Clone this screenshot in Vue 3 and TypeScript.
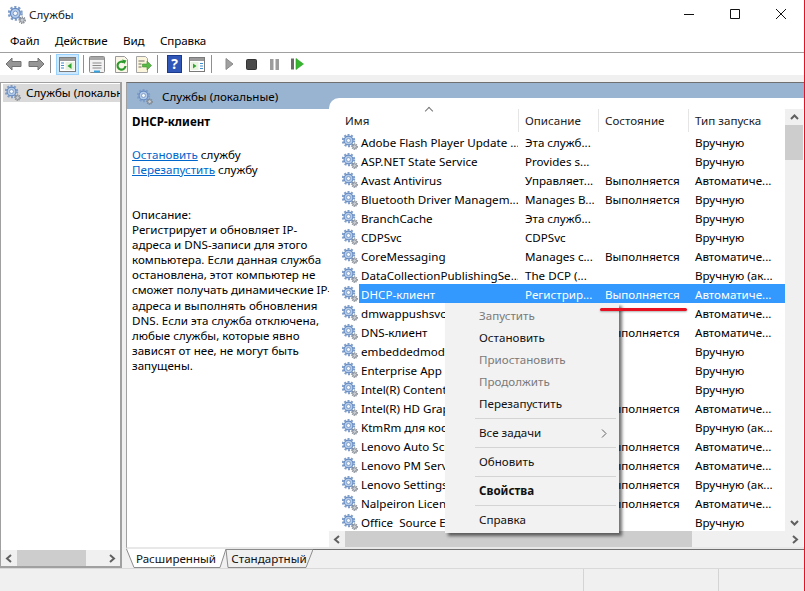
<script setup lang="ts">
interface Service {
  name: string
  desc: string
  state: string
  start: string
  selected?: boolean
}

const RUN = 'Выполняется'
const AUTO = 'Автоматиче...'
const MAN = 'Вручную'
const TRIG = 'Вручную (ак...'

const services: Service[] = [
  { name: 'Adobe Flash Player Update ...', desc: 'Эта служб...', state: '', start: MAN },
  { name: 'ASP.NET State Service', desc: 'Provides s...', state: '', start: MAN },
  { name: 'Avast Antivirus', desc: 'Управляет...', state: RUN, start: AUTO },
  { name: 'Bluetooth Driver Managem...', desc: 'Manages B...', state: RUN, start: MAN },
  { name: 'BranchCache', desc: 'Эта служб...', state: '', start: MAN },
  { name: 'CDPSvc', desc: 'CDPSvc', state: '', start: MAN },
  { name: 'CoreMessaging', desc: 'Manages c...', state: RUN, start: AUTO },
  { name: 'DataCollectionPublishingSe...', desc: 'The DCP (...', state: '', start: TRIG },
  { name: 'DHCP-клиент', desc: 'Регистрир...', state: RUN, start: AUTO, selected: true },
  { name: 'dmwappushsvc', desc: '', state: '', start: AUTO },
  { name: 'DNS-клиент', desc: '', state: RUN, start: AUTO },
  { name: 'embeddedmode', desc: '', state: '', start: MAN },
  { name: 'Enterprise App Management', desc: '', state: '', start: MAN },
  { name: 'Intel(R) Content Protection', desc: '', state: '', start: MAN },
  { name: 'Intel(R) HD Graphics', desc: '', state: RUN, start: AUTO },
  { name: 'KtmRm для координатора', desc: '', state: '', start: TRIG },
  { name: 'Lenovo Auto Scroll', desc: '', state: RUN, start: AUTO },
  { name: 'Lenovo PM Service', desc: '', state: RUN, start: AUTO },
  { name: 'Lenovo Settings', desc: '', state: RUN, start: TRIG },
  { name: 'Nalpeiron Licensing', desc: '', state: RUN, start: AUTO },
  { name: 'Office  Source Engine', desc: '', state: '', start: MAN },
]

const descLines = [
  'Описание:',
  'Регистрирует и обновляет IP-',
  'адреса и DNS-записи для этого',
  'компьютера. Если данная служба',
  'остановлена, этот компьютер не',
  'сможет получать динамические IP-',
  'адреса и выполнять обновления',
  'DNS. Если эта служба отключена,',
  'любые службы, которые явно',
  'зависят от нее, не могут быть',
  'запущены.',
]

const menuItems = [
  { label: 'Запустить', off: true },
  { label: 'Остановить' },
  { label: 'Приостановить', off: true },
  { label: 'Продолжить', off: true },
  { label: 'Перезапустить' },
  { sep: true },
  { label: 'Все задачи', arrow: true },
  { sep: true },
  { label: 'Обновить' },
  { sep: true },
  { label: 'Свойства', bold: true },
  { sep: true },
  { label: 'Справка' },
]
</script>

<template>
  <div class="win">
    <svg width="0" height="0" class="defs">
      <symbol id="gear" viewBox="0 0 16 16">
        <circle cx="6.5" cy="6.5" r="5.7" fill="none" stroke="#7f9dc9" stroke-width="2" stroke-dasharray="2 1.6" />
        <circle cx="6.5" cy="6.5" r="4.4" fill="#b4cbea" stroke="#648ac0" stroke-width="1.1" />
        <circle cx="6.5" cy="6.5" r="2" fill="#f4f8fd" stroke="#6f90bf" stroke-width=".8" />
        <circle cx="12.6" cy="12.6" r="2.7" fill="none" stroke="#7f868e" stroke-width="1.2" stroke-dasharray="1.1 .9" />
        <circle cx="12.6" cy="12.6" r="1.9" fill="#c8cdd3" stroke="#6f767e" stroke-width=".7" />
      </symbol>
    </svg>

    <header class="titlebar">
      <svg class="gear title-gear"><use href="#gear" /></svg>
      <span class="title">Службы</span>
      <div class="winbtns">
        <svg width="46" height="30" viewBox="0 0 46 30"><path d="M18 14.500h10" stroke="#111" fill="none" /></svg>
        <svg width="46" height="30" viewBox="0 0 46 30"><path d="M18.500 9.500h9v9h-9z" stroke="#111" fill="none" /></svg>
        <svg width="46" height="30" viewBox="0 0 46 30"><path d="M18 9l10 10M28 9l-10 10" stroke="#111" fill="none" /></svg>
      </div>
    </header>

    <nav class="menubar">
      <span>Файл</span><span>Действие</span><span>Вид</span><span>Справка</span>
    </nav>

    <div class="toolbar">
      <svg width="17" height="14" viewBox="0 0 17 14"><path d="M1 7l6-6v3.500h9v5H7V13z" fill="#969696" stroke="#737373" /></svg>
      <svg class="t-next" width="17" height="14" viewBox="0 0 17 14"><path d="M16 7l-6-6v3.500H1v5h9V13z" fill="#969696" stroke="#737373" /></svg>
      <i class="tsep s1"></i>
      <div class="tbtn">
        <svg width="17" height="15" viewBox="0 0 17 15"><rect x=".5" y=".5" width="16" height="14" fill="#fff" stroke="#7a7a7a" /><rect x="1" y="1" width="15" height="3" fill="#9a9a9a" /><path d="M2 6h3M2 8.500h3M2 11h3" stroke="#3f8fd0" stroke-width="1.200" /><rect x="6.500" y="5" width="9" height="8" fill="#e8f3e0" /><path d="M12.500 6v6l-4-3z" fill="#2fa52f" /></svg>
      </div>
      <i class="tsep s2"></i>
      <svg class="t-a" width="16" height="17" viewBox="0 0 16 17"><rect x=".5" y=".5" width="15" height="16" rx="1" fill="#f2f2f2" stroke="#8a8a8a" /><rect x="1" y="1" width="14" height="3" fill="#a8a8a8" /><path d="M3.500 7h9M3.500 9.500h9M3.500 12h9" stroke="#8a8a8a" /><path d="M5 15.500h6" stroke="#36a2e0" stroke-width="2" /></svg>
      <svg class="t-b" width="15" height="17" viewBox="0 0 15 17"><path d="M1.500.5h9l3 3v13h-12z" fill="#fbf7e8" stroke="#9a9a9a" /><path d="M11.500 10a4 4 0 1 1-1.500-3.500" fill="none" stroke="#2d9a2d" stroke-width="2.200" /><path d="M8 3.500l4.500 1-2 3.500z" fill="#2d9a2d" /></svg>
      <svg class="t-c" width="17" height="17" viewBox="0 0 17 17"><path d="M1.500.5h9l2 2v14h-11z" fill="#fbf5dc" stroke="#a5a5a5" /><path d="M3.500 5h6M3.500 8h3M3.500 11h3" stroke="#6e6e6e" /><path d="M7.500 8h4.500V5l4.500 4.500L12 14v-3H7.500z" fill="#58b947" stroke="#3c8f31" stroke-width=".6" /></svg>
      <i class="tsep s1"></i>
      <div class="help">?</div>
      <svg class="t-d" width="16" height="15" viewBox="0 0 16 15"><rect x=".5" y=".5" width="15" height="14" fill="#fff" stroke="#7a7a7a" /><rect x="1" y="1" width="14" height="3" fill="#9a9a9a" /><rect x="1.500" y="5" width="8" height="8" fill="#e8f3e0" /><path d="M4 6.500v5l3.500-2.500z" fill="#2fa52f" /><path d="M11 6.500h3M11 9h3M11 11.500h3" stroke="#3f8fd0" stroke-width="1.200" /></svg>
      <i class="tsep s3"></i>
      <svg class="t-play" width="9" height="12" viewBox="0 0 9 12"><path d="M1 .5v11l7-5.500z" fill="#a0a0a0" stroke="#8b8b8b" /></svg>
      <svg class="t-stop" width="11" height="11" viewBox="0 0 11 11"><rect x=".5" y=".5" width="10" height="10" rx="1" fill="#4a4a4a" stroke="#333" /></svg>
      <svg class="t-pause" width="9" height="11" viewBox="0 0 9 11"><path d="M0 0h3.500v11H0zM5.500 0H9v11H5.500z" fill="#9c9c9c" /></svg>
      <svg class="t-resume" width="13" height="12" viewBox="0 0 13 12"><path d="M0 .5h3v11H0z" fill="#6a6a6a" /><path d="M5 .5v11l7.500-5.500z" fill="#36b62e" stroke="#2a9a24" stroke-width=".6" /></svg>
    </div>

    <main class="main">
      <aside class="tree">
        <div class="tree-body">
          <div class="tree-item">
            <svg class="gear"><use href="#gear" /></svg>
            <span>Службы (локальные)</span>
          </div>
        </div>
        <div class="hbar tree-bar">
          <svg class="arr" width="16" height="9" viewBox="0 0 16 9"><path d="M10 1L6 4.500 10 8" fill="none" stroke="#606060" stroke-width="2" /></svg>
          <div class="track"><i class="thumb"></i></div>
          <svg class="arr" width="16" height="9" viewBox="0 0 16 9"><path d="M6 1l4 3.500L6 8" fill="none" stroke="#606060" stroke-width="2" /></svg>
        </div>
      </aside>

      <section class="content">
        <div class="pane">
          <div class="info">
            <div class="info-head">
              <svg class="gear"><use href="#gear" /></svg>
              <span>Службы (локальные)</span>
            </div>
            <div class="info-body">
              <h1>DHCP-клиент</h1>
              <p class="links"><a>Остановить</a> службу<br /><a>Перезапустить</a> службу</p>
              <p v-for="(l, i) in descLines" :key="i" class="dl">{{ l }}</p>
            </div>
          </div>

          <div class="list">
            <div class="list-main">
              <div class="rows">
                <div class="thead">
                  <span class="sort"></span>
                  <div class="c1">Имя</div>
                  <div class="c2">Описание</div>
                  <div class="c3">Состояние</div>
                  <div class="c4">Тип запуска</div>
                </div>
                <div v-for="s in services" :key="s.name" class="row" :class="{ sel: s.selected }">
                  <div class="c1">
                    <svg class="gear"><use href="#gear" /></svg>
                    <span class="nm">{{ s.name }}</span>
                  </div>
                  <div class="c2">{{ s.desc }}</div>
                  <div class="c3">{{ s.state }}</div>
                  <div class="c4">{{ s.start }}</div>
                </div>
              </div>
              <div class="vbar">
                <span class="varr">
                  <svg width="9" height="6" viewBox="0 0 9 6"><path d="M1 5l3.500-3.500L8 5" fill="none" stroke="#606060" stroke-width="2" /></svg>
                </span>
                <i class="vthumb"></i>
                <span class="varr bottom">
                  <svg width="9" height="6" viewBox="0 0 9 6"><path d="M1 1l3.500 3.500L8 1" fill="none" stroke="#606060" stroke-width="2" /></svg>
                </span>
              </div>
            </div>
            <div class="hbar list-bar">
              <svg class="arr" width="16" height="9" viewBox="0 0 16 9"><path d="M10 1L6 4.500 10 8" fill="none" stroke="#606060" stroke-width="2" /></svg>
              <div class="track"><i class="thumb"></i></div>
              <svg class="arr" width="16" height="9" viewBox="0 0 16 9"><path d="M6 1l4 3.500L6 8" fill="none" stroke="#606060" stroke-width="2" /></svg>
            </div>
          </div>
        </div>

        <div class="tabs">
          <div class="tab active">
            <svg class="tab-shape" width="100" height="19" viewBox="0 0 100 19"><path d="M.5 0l7.500 18.500h86L100 0" fill="#fff" stroke="#8c8c8c" /></svg>
            <span>Расширенный</span>
          </div>
          <div class="tab second">
            <svg class="tab-shape" width="87" height="19" viewBox="0 0 87 19"><path d="M0 .5h87l-7 18H2z" fill="none" stroke="#8c8c8c" /></svg>
            <span>Стандартный</span>
          </div>
          <div class="tab-rest"></div>
        </div>
      </section>
    </main>

    <footer class="status">
      <i></i><i></i><i></i>
    </footer>

    <div class="ctx">
      <template v-for="(m, i) in menuItems" :key="i">
        <div v-if="m.sep" class="ctx-sep"></div>
        <div v-else class="ctx-item" :class="{ off: m.off, bold: m.bold }">
          {{ m.label }}
          <svg v-if="m.arrow" class="ctx-arr" width="6" height="9" viewBox="0 0 6 9"><path d="M1 .5l4 4-4 4" fill="none" stroke="#606060" /></svg>
        </div>
      </template>
    </div>

    <div class="mark"></div>
  </div>
</template>

<style>
html, body { margin: 0; background: #fff; }
</style>

<style scoped>
.win {
  position: relative;
  width: 805px;
  height: 591px;
  box-sizing: border-box;
  border-right: 1px solid #e81123;
  background: #fff;
  display: flex;
  flex-direction: column;
  overflow: hidden;
  font: 11.6px/16px "Noto Sans", "Open Sans", sans-serif;
  color: #000;
}
.defs { position: absolute; }
.gear { width: 16px; height: 16px; flex: none; }

.titlebar { height: 30px; display: flex; align-items: center; padding-left: 8px; }
.title-gear { width: 18px; height: 18px; }
.title { margin-left: 3px; color: #222; }
.winbtns { margin-left: auto; display: flex; }

.menubar { height: 22px; display: flex; gap: 15.5px; padding-left: 10px; align-items: center; border-bottom: 1px solid #a0a0a0; letter-spacing: -.1px; }

.toolbar { height: 22px; display: flex; align-items: center; padding-left: 5px; border-bottom: 7px solid #f0f0f0; box-sizing: content-box; }
.t-next { margin-left: 6px; }
.tsep { width: 1px; height: 18px; background: #8f8f8f; flex: none; }
.tsep.s1 { margin-left: 5px; }
.tsep.s2 { margin-left: 4px; }
.tsep.s3 { margin-left: 6px; }
.tbtn { width: 23px; height: 21px; margin-left: 5px; box-sizing: border-box; display: flex; align-items: center; justify-content: center; border: 1px solid #99d1ff; background: #cce8ff; }
.t-a { margin-left: 5px; }
.t-b { margin-left: 9px; }
.t-c { margin-left: 6px; }
.help { width: 15px; height: 18px; box-sizing: border-box; margin-left: 9px; background: #3056b8; color: #fff; font-weight: 700; font-size: 14px; line-height: 16px; text-align: center; border: 1px solid #1c3a8c; }
.t-d { margin-left: 7px; }
.t-play { margin-left: 13px; }
.t-stop { margin-left: 12px; }
.t-pause { margin-left: 13px; }
.t-resume { margin-left: 12px; }

.main { flex: 1; display: flex; min-height: 0; background: #f0f0f0; }
.tree {
  width: 122px;
  box-sizing: border-box;
  border: 1px solid #a0a0a0;
  border-width: 1px 2px 2px 1px;
  background: #fff;
  display: flex;
  flex-direction: column;
}
.tree-body { flex: 1; overflow: hidden; }
.tree-item { height: 18px; margin: 1px 0 0 2px; background: #d9d9d9; display: flex; align-items: center; gap: 5px; padding-left: 2px; white-space: nowrap; overflow: hidden; }

.hbar { height: 16px; background: #f0f0f0; display: flex; align-items: center; flex: none; }
.arr { flex: none; }
.track { flex: 1; height: 100%; }
.thumb { display: block; height: 100%; background: #cdcdcd; }
.tree-bar .thumb { width: 69px; }

.content { flex: 1; margin-left: 4px; display: flex; flex-direction: column; min-width: 0; }
.pane {
  flex: 1;
  display: flex;
  min-height: 0;
  background: #99b4d1;
  border-top: 1px solid #707070;
  border-left: 1px solid #a0a0a0;
  border-bottom: 2px solid #e8e8e8;
}
.info { width: 202px; flex: none; display: flex; flex-direction: column; }
.info-head { height: 26px; box-sizing: border-box; padding: 2px 0 0 10px; display: flex; align-items: center; gap: 9px; }
.info-body { flex: 1; background: #fff; padding: 4px 5px; }
.info-body h1 { margin: 0 0 16px; font-size: 11.6px; font-weight: 700; line-height: 18px; }
.links { margin: 0 0 30px; line-height: 15px; }
.links a { color: #0066cc; text-decoration: underline; }
.dl { margin: 0; line-height: 15.1px; white-space: nowrap; }

.list { flex: 1; margin-top: 15px; background: #fff; border-top-left-radius: 10px; display: flex; flex-direction: column; min-width: 0; }
.list-main { flex: 1; display: flex; min-height: 0; }
.rows { width: 456px; flex: none; overflow: hidden; }
.thead { position: relative; height: 23px; margin-top: 11px; display: flex; align-items: center; color: #222; }
.thead .c1 { padding-left: 16px; padding-top: 1px; }
.thead .c2, .thead .c3, .thead .c4 { border-left: 1px solid #e5e5e5; height: 23px; line-height: 23px; padding-left: 6px; }
.sort { position: absolute; top: -1px; left: 97px; width: 5px; height: 5px; border-left: 1px solid #777; border-top: 1px solid #777; transform: rotate(45deg); }
.c1 { width: 189px; box-sizing: border-box; flex: none; overflow: hidden; white-space: pre; }
.c2 { width: 80px; box-sizing: border-box; padding-left: 7px; flex: none; white-space: nowrap; overflow: hidden; }
.c3 { width: 90px; box-sizing: border-box; padding-left: 7px; flex: none; white-space: nowrap; }
.c4 { width: 97px; box-sizing: border-box; padding-left: 7px; flex: none; white-space: nowrap; }
.row { height: 19px; display: flex; align-items: center; }
.row .c1 { display: flex; align-items: center; height: 19px; padding-left: 13px; gap: 3px; }
.row .gear { margin-top: 1px; }
.row .nm { padding-top: 2px; line-height: 17px; }
.row .c2, .row .c3, .row .c4 { box-sizing: border-box; height: 19px; padding-top: 2px; line-height: 17px; }
.row.sel .c1 { background: linear-gradient(#3399ff, #3399ff) no-repeat 30px 0 / 100% 100%; color: #fff; }
.row.sel .c2, .row.sel .c3, .row.sel .c4 { background: #3399ff; color: #fff; }

.vbar { flex: 1; margin-top: 11px; background: #f0f0f0; margin-right: 1px; display: flex; flex-direction: column; align-items: center; }
.varr { height: 16px; width: 100%; display: flex; align-items: center; justify-content: center; flex: none; }
.varr.bottom { margin-top: auto; }
.vthumb { width: 100%; height: 35px; background: #cdcdcd; }
.list-bar { margin-right: 1px; }
.list-bar .thumb { width: 347px; }

.tabs { height: 19px; flex: none; display: flex; }
.tab { position: relative; flex: none; text-align: center; line-height: 20px; color: #111; }
.tab.active { width: 100px; }
.tab.second { width: 87px; padding-right: 1px; box-sizing: border-box; }
.tab span { position: relative; }
.tab-shape { position: absolute; left: 0; top: 0; }
.tab-rest { flex: 1; border-top: 1px solid #707070; }

.status { height: 22px; flex: none; background: #f0f0f0; border-top: 1px solid #d9d9d9; display: flex; padding-left: 583px; }
.status i { width: 134px; height: 100%; border-left: 1px solid #d4d4d4; flex: none; }
.status i:nth-child(2) { width: 85px; }
.status i:nth-child(3) { width: 0; }

.ctx {
  position: absolute;
  left: 445px;
  top: 303px;
  width: 174px;
  height: 230px;
  box-sizing: border-box;
  padding: 2px 3px 2px 30px;
  background: #f2f2f2;
  box-shadow: 3px 3px 3px rgba(0, 0, 0, .55);
}
.ctx-item { height: 22px; line-height: 22px; padding-left: 4px; position: relative; color: #111; }
.ctx-item.off { color: #7a7a7a; }
.ctx-item.bold { font-weight: 700; }
.ctx-arr { position: absolute; right: 9px; top: 7px; }
.ctx-sep { height: 1px; margin: 3px 0; background: #d4d4d4; }

.mark { position: absolute; left: 600px; top: 308px; width: 87px; height: 3px; border-radius: 2px; background: #e81123; box-shadow: 0 1px 2px rgba(0, 0, 0, .3); }
</style>
